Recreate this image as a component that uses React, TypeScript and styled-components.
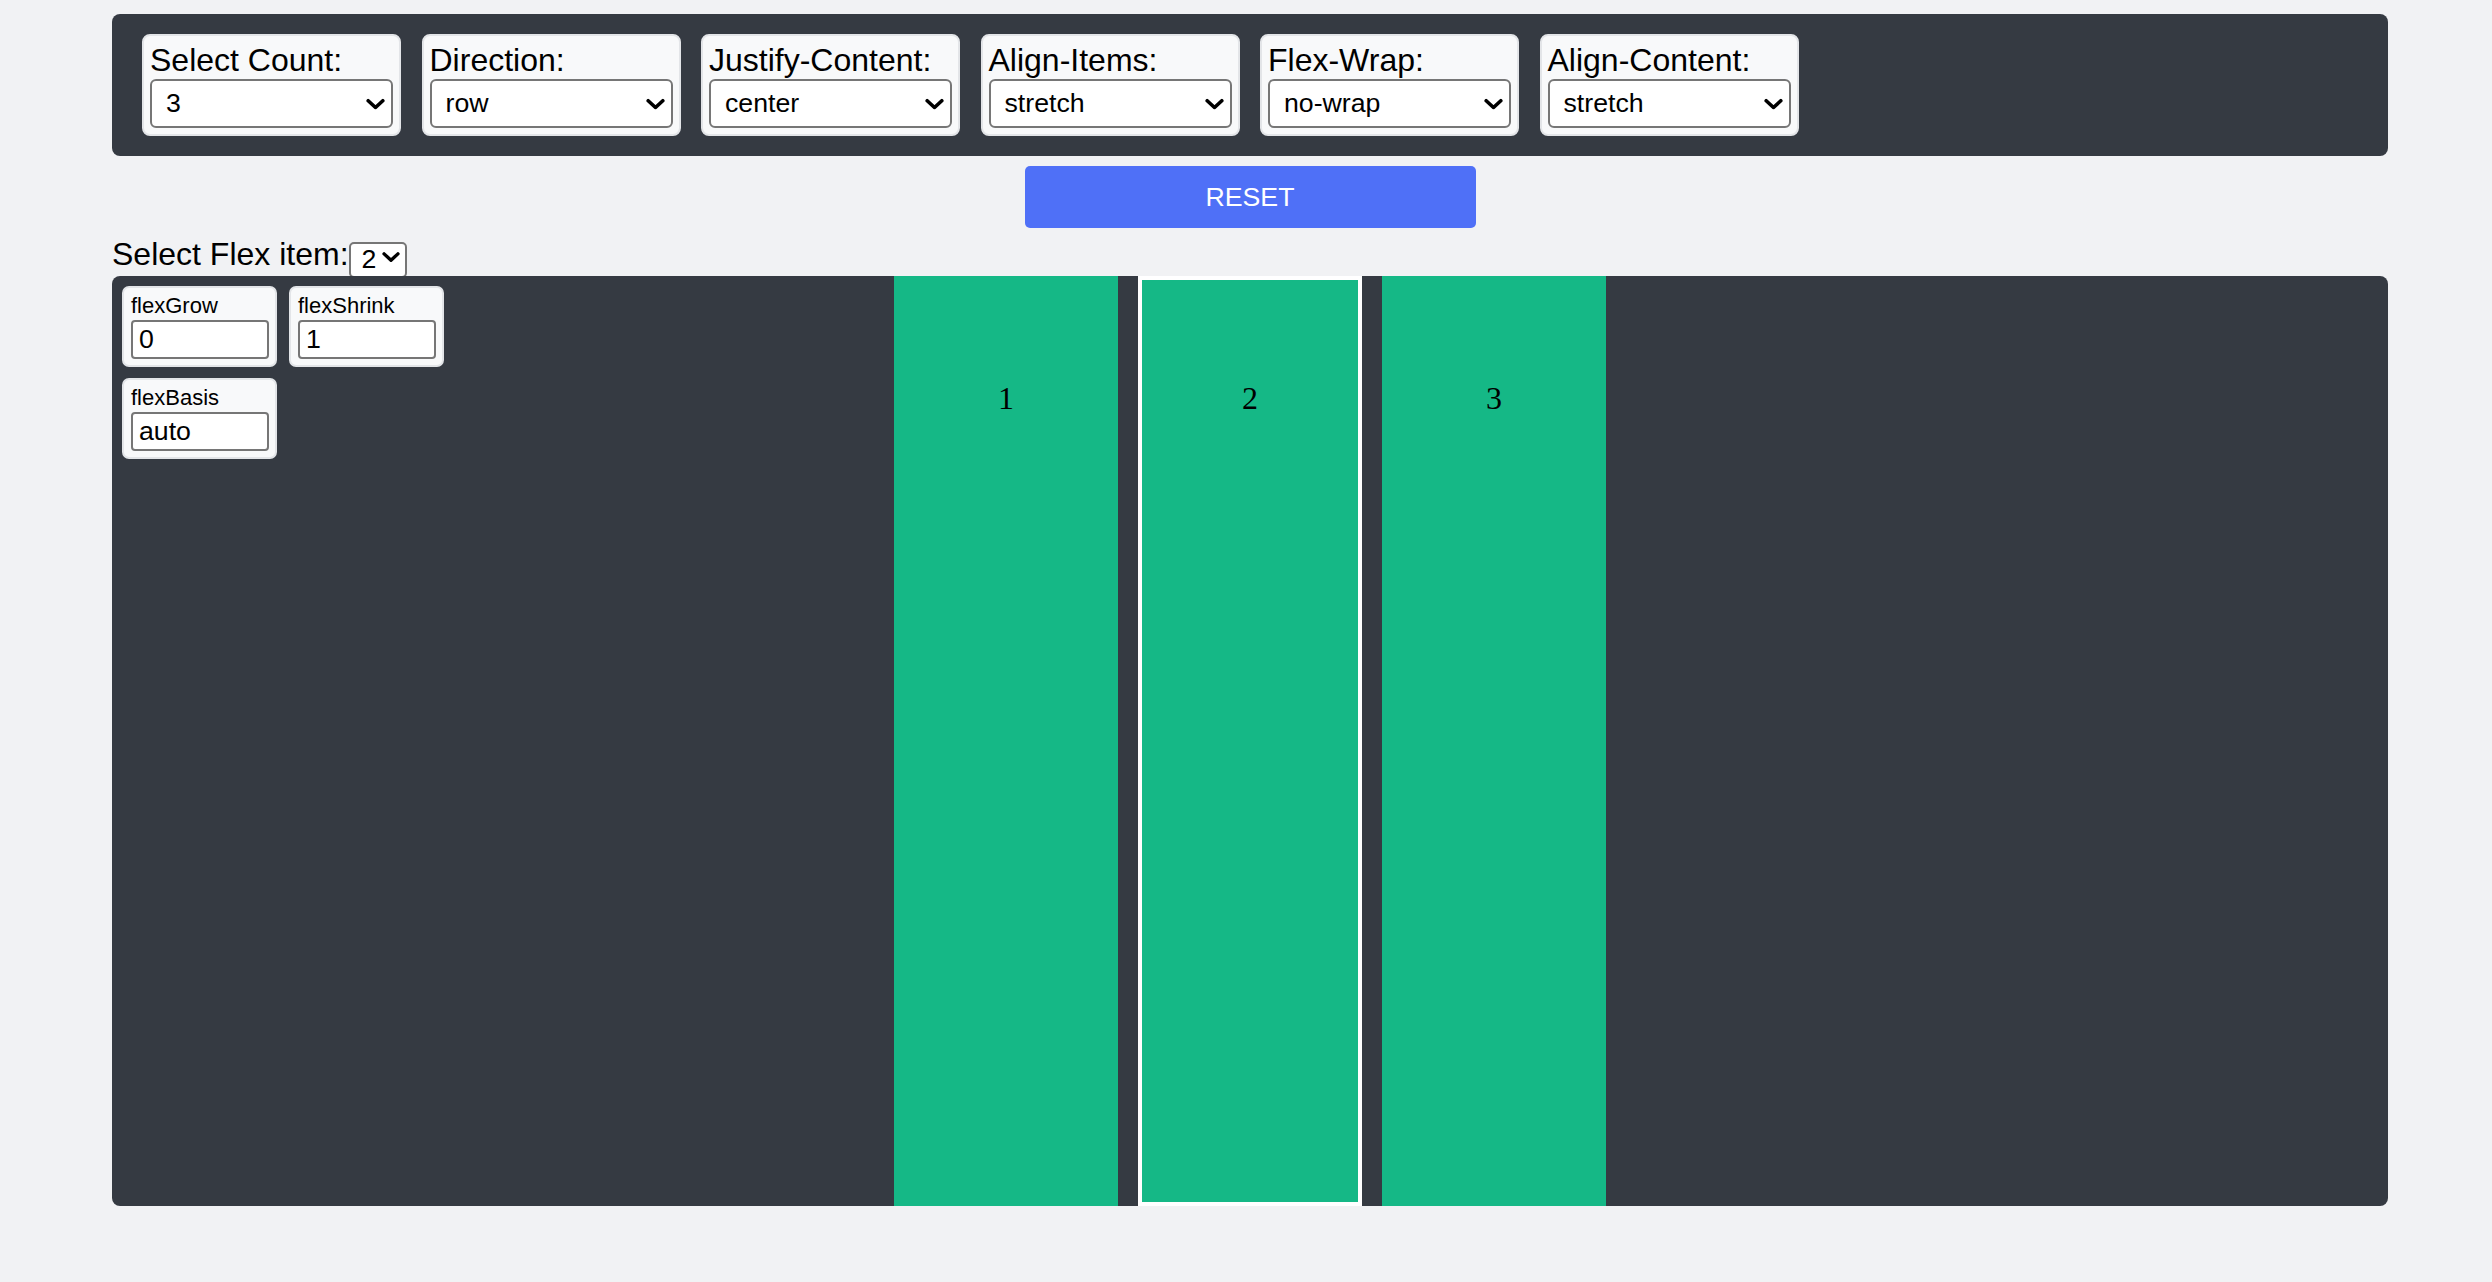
import React, { useState } from "react";
import styled, { createGlobalStyle } from "styled-components";

const GlobalStyle = createGlobalStyle`
  html, body {
    margin: 0;
    padding: 0;
    background: #f1f2f4;
    font-family: "Liberation Sans", Arial, sans-serif;
  }
  * { box-sizing: border-box; }
`;

const Page = styled.div`
  padding: 14px 104px 40px 112px;
  display: flex;
  flex-direction: column;
`;

const ControlPanel = styled.div`
  background: #353a42;
  border-radius: 8px;
  padding: 20px 30px;
  display: flex;
  gap: 20.5px;
`;

const ControlCard = styled.div`
  width: 259px;
  height: 102px;
  background: #f8f9fa;
  border: 2px solid #e3e5e8;
  border-radius: 8px;
  padding: 6px;
  display: flex;
  flex-direction: column;
`;

const CardLabel = styled.label`
  font-size: 32px;
  line-height: 37px;
  color: #000;
  white-space: nowrap;
`;

const SelectWrap = styled.div<{ $small?: boolean }>`
  position: relative;
  width: ${(p) => (p.$small ? "58px" : "243px")};
  height: ${(p) => (p.$small ? "36px" : "49px")};
`;

const NativeSelect = styled.select<{ $small?: boolean }>`
  appearance: none;
  -webkit-appearance: none;
  width: 100%;
  height: 100%;
  margin: 0;
  background: #fff;
  color: #000;
  border: 2px solid #767676;
  border-radius: ${(p) => (p.$small ? "5px" : "6px")};
  font-family: "Liberation Sans", Arial, sans-serif;
  font-size: 26.7px;
  padding: 0 0 2px ${(p) => (p.$small ? "11px" : "14px")};
  outline: none;
`;

const Chevron = styled.svg<{ $small?: boolean }>`
  position: absolute;
  right: ${(p) => (p.$small ? "7px" : "8px")};
  top: 50%;
  transform: translateY(-50%);
  pointer-events: none;
`;

const ResetButton = styled.button`
  align-self: center;
  margin-top: 10px;
  width: 451px;
  height: 62px;
  background: #4f70f7;
  color: #fff;
  border: none;
  border-radius: 5px;
  font-family: "Liberation Sans", Arial, sans-serif;
  font-size: 26.7px;
  cursor: pointer;
`;

const ItemRow = styled.div`
  margin-top: 10px;
  height: 38px;
  display: flex;
  align-items: center;
  font-size: 32px;
  color: #000;
`;

const RowLabel = styled.span`
  line-height: 37px;
  padding-bottom: 6px;
`;

const Stage = styled.div`
  position: relative;
  height: 930px;
  background: #353a42;
  border-radius: 8px;
  display: flex;
  flex-direction: row;
  justify-content: center;
  align-items: stretch;
  flex-wrap: nowrap;
`;

const FlexItem = styled.div<{ $selected?: boolean }>`
  width: 224px;
  flex: 0 1 auto;
  margin: 0 10px;
  background: #15b886;
  box-shadow: ${(p) => (p.$selected ? "inset 0 0 0 4px #ffffff" : "none")};
  font-family: "Liberation Serif", "Times New Roman", serif;
  font-size: 32px;
  color: #000;
  text-align: center;
  padding-top: 104px;
`;

const PropPanel = styled.div`
  position: absolute;
  left: 10px;
  top: 10px;
  display: grid;
  grid-template-columns: 155px 155px;
  column-gap: 12px;
  row-gap: 11px;
`;

const PropCard = styled.div`
  height: 81px;
  background: #f8f9fa;
  border: 2px solid #e3e5e8;
  border-radius: 7px;
  padding: 5px 6px 6px 7px;
  display: flex;
  flex-direction: column;
`;

const PropLabel = styled.label`
  font-size: 22px;
  line-height: 26px;
  color: #000;
`;

const PropInput = styled.input`
  width: 138px;
  height: 40px;
  margin: 1px 0 0;
  border: 2px solid #767676;
  border-radius: 4px;
  background: #fff;
  font-family: "Liberation Sans", Arial, sans-serif;
  font-size: 26.7px;
  padding: 0 0 0 6px;
  color: #000;
  outline: none;
`;

const ChevronIcon = ({ small }: { small?: boolean }) => (
  <Chevron $small={small} width={small ? 18 : 19} height={11} viewBox="0 0 19 11">
    <path d="M2.2 2.2 L9.5 9 L16.8 2.2" fill="none" stroke="#000" strokeWidth="3.6" strokeLinecap="round" strokeLinejoin="round" />
  </Chevron>
);

const Select = ({ value, options, small }: { value: string; options: string[]; small?: boolean }) => (
  <SelectWrap $small={small}>
    <NativeSelect $small={small} defaultValue={value}>
      {options.map((o) => (
        <option key={o} value={o}>{o}</option>
      ))}
    </NativeSelect>
    <ChevronIcon small={small} />
  </SelectWrap>
);

const controls: { label: string; value: string; options: string[] }[] = [
  { label: "Select Count:", value: "3", options: ["1", "2", "3", "4", "5", "6"] },
  { label: "Direction:", value: "row", options: ["row", "row-reverse", "column", "column-reverse"] },
  { label: "Justify-Content:", value: "center", options: ["flex-start", "flex-end", "center", "space-between", "space-around", "space-evenly"] },
  { label: "Align-Items:", value: "stretch", options: ["stretch", "flex-start", "flex-end", "center", "baseline"] },
  { label: "Flex-Wrap:", value: "no-wrap", options: ["no-wrap", "wrap", "wrap-reverse"] },
  { label: "Align-Content:", value: "stretch", options: ["stretch", "flex-start", "flex-end", "center", "space-between", "space-around"] },
];

export default function App() {
  const [selected] = useState(2);
  const items = [1, 2, 3];
  return (
    <>
      <GlobalStyle />
      <Page>
        <ControlPanel>
          {controls.map((c) => (
            <ControlCard key={c.label}>
              <CardLabel>{c.label}</CardLabel>
              <Select value={c.value} options={c.options} />
            </ControlCard>
          ))}
        </ControlPanel>
        <ResetButton>RESET</ResetButton>
        <ItemRow>
          <RowLabel>Select Flex item:</RowLabel>
          <Select value="2" options={["1", "2", "3"]} small />
        </ItemRow>
        <Stage>
          <PropPanel>
            <PropCard>
              <PropLabel>flexGrow</PropLabel>
              <PropInput defaultValue="0" />
            </PropCard>
            <PropCard>
              <PropLabel>flexShrink</PropLabel>
              <PropInput defaultValue="1" />
            </PropCard>
            <PropCard>
              <PropLabel>flexBasis</PropLabel>
              <PropInput defaultValue="auto" />
            </PropCard>
          </PropPanel>
          {items.map((n) => (
            <FlexItem key={n} $selected={n === selected}>{n}</FlexItem>
          ))}
        </Stage>
      </Page>
    </>
  );
}
